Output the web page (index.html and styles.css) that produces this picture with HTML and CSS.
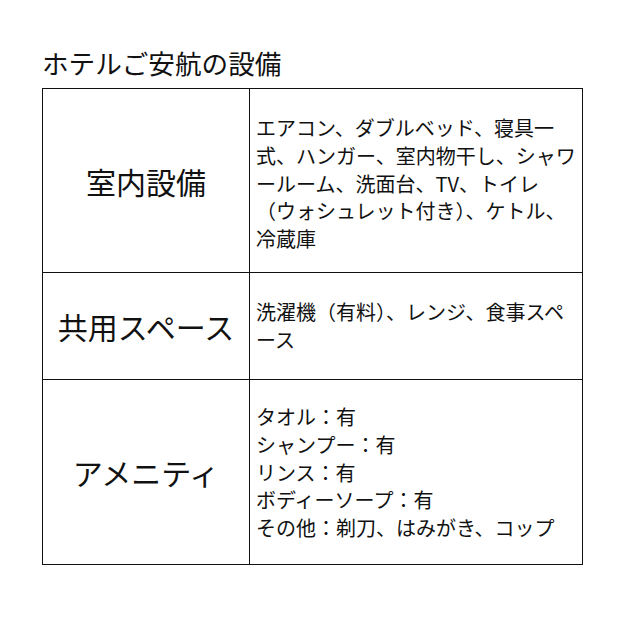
FILE: index.html
```html
<!DOCTYPE html>
<html lang="ja">
<head>
<meta charset="utf-8">
<link rel="stylesheet" href="styles.css">
</head>
<body>
<div class="page">
  <h1 class="title">ホテルご安航の設備</h1>
  <table class="facilities">
    <tr class="row-room">
      <th class="label">室内設備</th>
      <td class="detail">エアコン、ダブルベッド、寝具一式、ハンガー、室内物干し、シャワールーム、洗面台、TV、トイレ（ウォシュレット付き）、ケトル、冷蔵庫</td>
    </tr>
    <tr class="row-shared">
      <th class="label">共用スペース</th>
      <td class="detail">洗濯機（有料）、レンジ、食事スペース</td>
    </tr>
    <tr class="row-amenity">
      <th class="label">アメニティ</th>
      <td class="detail">タオル：有<br>シャンプー：有<br>リンス：有<br>ボディーソープ：有<br>その他：剃刀、はみがき、コップ</td>
    </tr>
  </table>
</div>
</body>
</html>
```
FILE: styles.css
```css
html, body {
  margin: 0;
  padding: 0;
  background: #fff;
}
body {
  font-family: "Noto Sans CJK JP", "Noto Sans", sans-serif;
  color: #111;
}
.page {
  padding: 45px 0 0 42px;
}
.title {
  margin: 0 0 7px 0;
  font-size: 26.6px;
  line-height: 36px;
  font-weight: 400;
}
.facilities {
  border-collapse: collapse;
  width: 541px;
  table-layout: fixed;
}
.facilities th,
.facilities td {
  border: 1px solid #111;
  padding: 0;
}
.label {
  width: 206px;
  font-size: 30px;
  font-weight: 400;
  text-align: center;
  vertical-align: middle;
  line-height: 40px;
}
.detail {
  font-size: 20px;
  line-height: 27.8px;
  vertical-align: top;
  text-align: left;
  line-break: loose;
  padding: 0 4px 0 6px !important;
}
.row-room { height: 184px; }
.row-room .detail { padding-top: 25px !important; }
.row-shared { height: 107px; }
.row-shared .detail { padding-top: 25px !important; }
.row-amenity { height: 185px; }
.row-amenity .detail { padding-top: 23px !important; }
```
